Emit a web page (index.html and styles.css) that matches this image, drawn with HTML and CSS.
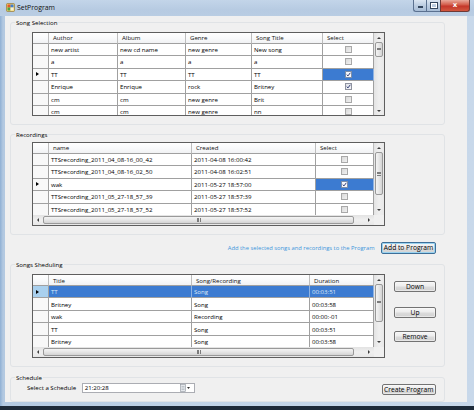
FILE: index.html
```html
<!DOCTYPE html>
<html>
<head>
<meta charset="utf-8">
<title>SetProgram</title>
<link rel="stylesheet" href="styles.css">
</head>
<body>
<div class="window">
  <div class="titlebar">
    <svg class="appicon" width="9" height="9" viewBox="0 0 9 9">
      <rect x="0.5" y="0.5" width="8" height="8" rx="1" fill="#f3d36b" stroke="#8a6a2a" stroke-width="0.6"/>
      <rect x="1.5" y="1.5" width="3" height="3" fill="#e2562f"/>
      <rect x="4.5" y="1.5" width="3" height="3" fill="#3f7fd0"/>
      <rect x="1.5" y="4.5" width="3" height="3" fill="#4aa34a"/>
      <rect x="4.5" y="4.5" width="3" height="3" fill="#f6f0d8"/>
    </svg>
    <span class="title">SetProgram</span>
    <div class="caption">
      <span class="cbtn cmin"><span class="dash"></span></span>
      <span class="cbtn cmax"><span class="sq"></span></span>
      <span class="cbtn cclose">x</span>
    </div>
  </div>

  <div class="client">
    <fieldset class="group g1">
      <legend>Song Selection</legend>
      <div class="grid">
        <div class="grid-main h82">
          <div class="table t-songs">
            <div class="hc corner"></div><div class="hc">Author</div><div class="hc">Album</div><div class="hc">Genre</div><div class="hc">Song Title</div><div class="hc">Select</div>
            <div class="rh"></div><div class="c">new artist</div><div class="c">new cd name</div><div class="c">new genre</div><div class="c">New song</div><div class="c ck"><span class="box"></span></div>
            <div class="rh"></div><div class="c">a</div><div class="c">a</div><div class="c">a</div><div class="c">a</div><div class="c ck"><span class="box"></span></div>
            <div class="rh"><span class="cur"></span></div><div class="c">TT</div><div class="c">TT</div><div class="c">TT</div><div class="c">TT</div><div class="c ck sel"><span class="box on"><svg width="5" height="5" viewBox="0 0 5 5"><path d="M0.7 2.6 L2 3.9 L4.3 0.8" fill="none" stroke="#1d2a66" stroke-width="0.9"/></svg></span></div>
            <div class="rh"></div><div class="c">Enrique</div><div class="c">Enrique</div><div class="c">rock</div><div class="c">Britney</div><div class="c ck"><span class="box on"><svg width="5" height="5" viewBox="0 0 5 5"><path d="M0.7 2.6 L2 3.9 L4.3 0.8" fill="none" stroke="#1d2a66" stroke-width="0.9"/></svg></span></div>
            <div class="rh"></div><div class="c">cm</div><div class="c">cm</div><div class="c">new genre</div><div class="c">Brit</div><div class="c ck"><span class="box"></span></div>
            <div class="rh"></div><div class="c">cm</div><div class="c">cm</div><div class="c">new genre</div><div class="c">nn</div><div class="c ck"><span class="box"></span></div>
          </div>
          <div class="vscroll">
            <div class="sbtn"><span class="tri up"></span></div>
            <div class="thumb th15"><span class="grip"></span></div>
            <div class="fill"></div>
            <div class="sbtn"><span class="tri down"></span></div>
          </div>
        </div>
      </div>
    </fieldset>

    <fieldset class="group g2">
      <legend>Recordings</legend>
      <div class="grid">
        <div class="grid-main">
          <div class="table t-rec">
            <div class="hc corner"></div><div class="hc">name</div><div class="hc">Created</div><div class="hc">Select</div>
            <div class="rh"></div><div class="c">TTSrecording_2011_04_08-16_00_42</div><div class="c">2011-04-08 16:00:42</div><div class="c ck"><span class="box"></span></div>
            <div class="rh"></div><div class="c">TTSrecording_2011_04_08-16_02_50</div><div class="c">2011-04-08 16:02:51</div><div class="c ck"><span class="box"></span></div>
            <div class="rh"><span class="cur"></span></div><div class="c">wak</div><div class="c">2011-05-27 18:57:00</div><div class="c ck sel"><span class="box on"><svg width="5" height="5" viewBox="0 0 5 5"><path d="M0.7 2.6 L2 3.9 L4.3 0.8" fill="none" stroke="#1d2a66" stroke-width="0.9"/></svg></span></div>
            <div class="rh"></div><div class="c">TTSrecording_2011_05_27-18_57_39</div><div class="c">2011-05-27 18:57:39</div><div class="c ck"><span class="box"></span></div>
            <div class="rh"></div><div class="c">TTSrecording_2011_05_27-18_57_52</div><div class="c">2011-05-27 18:57:52</div><div class="c ck"><span class="box"></span></div>
          </div>
          <div class="vscroll">
            <div class="sbtn"><span class="tri up"></span></div>
            <div class="thumb th43"><span class="grip"></span></div>
            <div class="fill"></div>
            <div class="sbtn"><span class="tri down"></span></div>
          </div>
        </div>
        <div class="hbar">
          <div class="hscroll">
            <div class="sbtn"><span class="tri left"></span></div>
            <div class="hthumb"><span class="hgrip"></span></div>
            <div class="fill"></div>
            <div class="sbtn"><span class="tri right"></span></div>
          </div>
          <div class="sb-corner"></div>
        </div>
      </div>
    </fieldset>

    <div class="addrow">
      <span class="hint">Add the selected songs and recordings to the Program</span>
      <button class="btn default">Add to Program</button>
    </div>

    <fieldset class="group g3">
      <legend>Songs Sheduling</legend>
      <div class="sched-row">
        <div class="grid">
          <div class="grid-main">
            <div class="table t-sched">
              <div class="hc corner"></div><div class="hc">Title</div><div class="hc">Song/Recording</div><div class="hc">Duration</div>
              <div class="rh rsel"><span class="cur"></span></div><div class="c sel">TT</div><div class="c sel">Song</div><div class="c sel">00:03:51</div>
              <div class="rh"></div><div class="c">Britney</div><div class="c">Song</div><div class="c">00:03:58</div>
              <div class="rh"></div><div class="c">wak</div><div class="c">Recording</div><div class="c">00:00:-01</div>
              <div class="rh"></div><div class="c">TT</div><div class="c">Song</div><div class="c">00:03:51</div>
              <div class="rh"></div><div class="c">Britney</div><div class="c">Song</div><div class="c">00:03:58</div>
            </div>
            <div class="vscroll">
              <div class="sbtn"><span class="tri up"></span></div>
              <div class="thumb th38"><span class="grip"></span></div>
              <div class="fill"></div>
              <div class="sbtn"><span class="tri down"></span></div>
            </div>
          </div>
          <div class="hbar">
            <div class="hscroll">
              <div class="sbtn"><span class="tri left"></span></div>
              <div class="hthumb"><span class="hgrip"></span></div>
              <div class="fill"></div>
              <div class="sbtn"><span class="tri right"></span></div>
            </div>
            <div class="sb-corner"></div>
          </div>
        </div>
        <div class="side-btns">
          <button class="btn b-down">Down</button>
          <button class="btn b-up">Up</button>
          <button class="btn b-remove">Remove</button>
        </div>
      </div>
    </fieldset>

    <fieldset class="group g4">
      <legend>Schedule</legend>
      <div class="schedule-row">
        <span class="sched-label">Select a Schedule</span>
        <div class="datepicker">
          <span class="dp-value">21:20:28</span>
          <svg class="dp-icon" width="10" height="8" viewBox="0 0 10 8">
            <rect x="0.5" y="0.5" width="5" height="7" fill="#e4e7ec" stroke="#8d939c" stroke-width="0.6"/>
            <line x1="1.5" y1="2.5" x2="4.5" y2="2.5" stroke="#9aa0a8" stroke-width="0.5"/>
            <line x1="1.5" y1="4" x2="4.5" y2="4" stroke="#9aa0a8" stroke-width="0.5"/>
            <line x1="1.5" y1="5.5" x2="4.5" y2="5.5" stroke="#9aa0a8" stroke-width="0.5"/>
            <path d="M7 3 L10 3 L8.5 5 Z" fill="#333"/>
          </svg>
        </div>
        <button class="btn b-create">Create Program</button>
      </div>
    </fieldset>
  </div>
</div>
<div class="desk"></div>
</body>
</html>
```

FILE: styles.css
```css
* { box-sizing: border-box; }
html, body { margin: 0; padding: 0; }
body {
  width: 474px;
  height: 410px;
  overflow: hidden;
  background: #1e2b3b;
  font-family: "Open Sans", "Noto Sans", sans-serif;
  font-size: 6.1px;
  color: #000;
}

.window {
  height: 406px;
  display: flex;
  flex-direction: column;
  background: linear-gradient(90deg, #8fb0d4 0, #b3c9e1 3px, #c0d3e7 40%, #c8d8ea 100%);
}
.desk { height: 4px; background: #1d2a39; }

/* title bar */
.titlebar {
  height: 16px;
  display: flex;
  align-items: flex-start;
  background: linear-gradient(180deg, #c3d5e9 0, #b7cbe2 60%, #b9cde3 100%);
}
.appicon { margin: 3px 0 0 6px; flex: none; }
.title {
  margin: 2px 0 0 2px;
  font-size: 6.9px;
  line-height: 11px;
  color: #111;
}
.caption { margin-left: auto; margin-right: 4px; display: flex; }
.cbtn {
  height: 12px;
  border: 1px solid #5b7190;
  border-top: none;
  display: flex;
  align-items: center;
  justify-content: center;
}
.cmin {
  width: 13px;
  border-right: none;
  border-radius: 0 0 0 3px;
  background: linear-gradient(#dbe6f2, #bccde1 50%, #a8bdd6);
}
.cmax {
  width: 14px;
  border-right: none;
  background: linear-gradient(#dbe6f2, #bccde1 50%, #a8bdd6);
}
.cclose {
  width: 30px;
  border-radius: 0 0 3px 0;
  background: linear-gradient(#e9a99b, #d25a48 45%, #c4362a 55%, #d2573f);
  color: #fff;
  font-family: "DejaVu Sans", sans-serif;
  font-weight: bold;
  font-size: 7px;
  line-height: 1;
  border-color: #6e3a36;
}
.dash { width: 5px; height: 2px; background: #fff; border: 0.5px solid #34475f; margin-top: 3px; }
.sq { width: 6px; height: 5px; border: 1px solid #fff; outline: 0.5px solid #34475f; }

/* client area */
.client {
  margin: 0 7px 0 5px;
  height: 386px;
  background: #f0f0f0;
  overflow: hidden;
  display: flex;
  flex-direction: column;
}

.group {
  margin: 0 0 0 5px;
  padding: 0 0 8px 0;
  width: 435px;
  min-width: 0;
  border: 1px solid #e0e3e6;
  border-radius: 3px;
  flex: none;
}
.group legend {
  margin-left: 4px;
  padding: 0 1px;
  line-height: 9px;
  font-size: 6.1px;
  color: #000;
}
.g1 { margin-top: 2px; }
.g1 > .grid { margin-top: 5px; }
.g2 { margin-top: 4.5px; }
.g2 > .grid { margin-top: 3.5px; }
.g3 { margin-top: 5.5px; }
.g3 .sched-row { margin-top: 5.8px; }
.g4 { margin-top: 5.5px; padding-bottom: 4px; }

/* data grid */
.grid {
  margin-left: 21px;
  width: 353px;
  height: 84px;
  border: 1px solid #5e5e5e;
  background: #fff;
  display: flex;
  flex-direction: column;
  overflow: hidden;
}
.grid-main { flex: 1; min-height: 0; display: flex; }
.grid-main.h82 { height: 82px; flex: none; }

.table {
  flex: 1;
  min-width: 0;
  display: grid;
  grid-template-rows: 10.5px;
  grid-auto-rows: 12.5px;
  align-content: start;
  overflow: hidden;
}
.t-songs { grid-template-columns: 16px 69px 68px 66px 71px 51px; }
.t-rec { grid-template-columns: 16px 143px 124px 58px; }
.t-sched { grid-template-columns: 16px 143px 118px 64px; }

.hc, .c, .rh {
  display: flex;
  align-items: center;
  white-space: nowrap;
  overflow: hidden;
  border-right: 1px solid #a0a0a0;
  border-bottom: 1px solid #a0a0a0;
}
.hc {
  padding-left: 4px;
  background: linear-gradient(#ffffff, #f9fafb 50%, #f1f2f4);
  border-right-color: #bdbdbd;
  color: #111;
}
.c { padding-left: 2px; color: #000; }
.rh { background: #f8f8f8; padding-left: 3px; }
.rh.rsel { background: #a9d0ee; }
.cur {
  width: 0; height: 0;
  border-left: 3px solid #000;
  border-top: 2.5px solid transparent;
  border-bottom: 2.5px solid transparent;
}
.sel { background: #3c7bd1; color: #dbe8f8; border-right-color: #8fb3e2; }
.ck { justify-content: center; padding-left: 0; }
.box {
  width: 7px; height: 7px;
  border: 1px solid #a9a9a9;
  background: linear-gradient(135deg, #d9d9d9, #f1f1f1);
  display: flex;
  align-items: center;
  justify-content: center;
}
.box.on { background: linear-gradient(135deg, #dfe2ea, #f4f5f8); border-color: #8f93a0; }
.sel .box { background: #f4f6fb; border-color: #7d8ea8; }

/* scroll bars */
.vscroll {
  width: 10px;
  flex: none;
  display: flex;
  flex-direction: column;
  background: linear-gradient(90deg, #e3e3e3, #efefef 50%, #e8e8e8);
}
.sbtn {
  flex: none;
  width: 10px;
  height: 9px;
  display: flex;
  align-items: center;
  justify-content: center;
}
.fill { flex: 1; }
.thumb {
  flex: none;
  margin: 0 1px;
  border: 1px solid #999;
  border-radius: 2px;
  background: linear-gradient(90deg, #f4f4f4, #e6e6e6 50%, #d4d4d4);
  display: flex;
  align-items: center;
  justify-content: center;
}
.th15 { height: 15px; }
.th43 { height: 43px; }
.th38 { height: 38px; }
.grip {
  width: 4px; height: 4px;
  background: repeating-linear-gradient(180deg, #7c7c7c 0, #7c7c7c 0.7px, transparent 0.7px, transparent 1.4px);
}
.tri { width: 0; height: 0; }
.tri.up { border-left: 2px solid transparent; border-right: 2px solid transparent; border-bottom: 2px solid #3d3d3d; }
.tri.down { border-left: 2px solid transparent; border-right: 2px solid transparent; border-top: 2px solid #3d3d3d; }
.tri.left { border-top: 2px solid transparent; border-bottom: 2px solid transparent; border-right: 2px solid #3d3d3d; }
.tri.right { border-top: 2px solid transparent; border-bottom: 2px solid transparent; border-left: 2px solid #3d3d3d; }

.hbar { height: 10.5px; flex: none; display: flex; }
.hscroll {
  flex: 1;
  display: flex;
  background: linear-gradient(180deg, #e3e3e3, #efefef 50%, #e8e8e8);
}
.hscroll .sbtn { height: 100%; }
.hthumb {
  width: 311px;
  flex: none;
  margin: 1px 0;
  border: 1px solid #999;
  border-radius: 2px;
  background: linear-gradient(180deg, #f4f4f4, #e6e6e6 50%, #d4d4d4);
  display: flex;
  align-items: center;
  justify-content: center;
}
.hgrip {
  width: 4px; height: 4px;
  background: repeating-linear-gradient(90deg, #7c7c7c 0, #7c7c7c 0.7px, transparent 0.7px, transparent 1.4px);
}
.sb-corner { width: 10px; flex: none; background: #f0f0f0; }

/* buttons */
.btn {
  font-family: "Open Sans", "Noto Sans", sans-serif;
  font-size: 6.7px;
  color: #000;
  padding: 0;
  height: 11px;
  line-height: 9px;
  border: 1px solid #737373;
  border-radius: 2px;
  background: linear-gradient(180deg, #f6f6f6 0, #ececec 48%, #dcdcdc 52%, #d2d2d2 100%);
  box-shadow: inset 0 0 0 0.5px #fbfbfb;
  flex: none;
}
.btn.default {
  border-color: #3d6f98;
  box-shadow: inset 0 0 0 1px #9ad3f0;
  height: 12.5px;
  width: 55px;
}

.addrow {
  margin-top: 6.5px;
  height: 12.5px;
  display: flex;
  align-items: center;
  justify-content: flex-end;
  padding-right: 31px;
  flex: none;
}
.hint { color: #3c96dc; margin-right: 6.5px; font-size: 5.8px; }

.sched-row { display: flex; align-items: flex-start; }
.side-btns {
  margin-left: 9px;
  width: 42px;
  display: flex;
  flex-direction: column;
}
.side-btns .btn { width: 42px; }
.b-down { margin-top: 6.4px; }
.b-up { margin-top: 15px; }
.b-remove { margin-top: 13px; }

.schedule-row {
  display: flex;
  align-items: flex-start;
  height: 15px;
}
.sched-label {
  margin-left: 16px;
  width: 54.7px;
  margin-top: 2px;
  line-height: 8px;
  color: #000;
}
.datepicker {
  width: 113px;
  height: 10px;
  margin-top: 1.2px;
  border: 1px solid #abadb3;
  background: #fff;
  display: flex;
  align-items: center;
  padding-left: 2px;
}
.dp-value { line-height: 8px; }
.dp-icon { margin-left: auto; margin-right: 4px; }
.b-create {
  margin-left: auto;
  margin-right: 8.3px;
  margin-top: 2.5px;
  width: 54px;
}
```
